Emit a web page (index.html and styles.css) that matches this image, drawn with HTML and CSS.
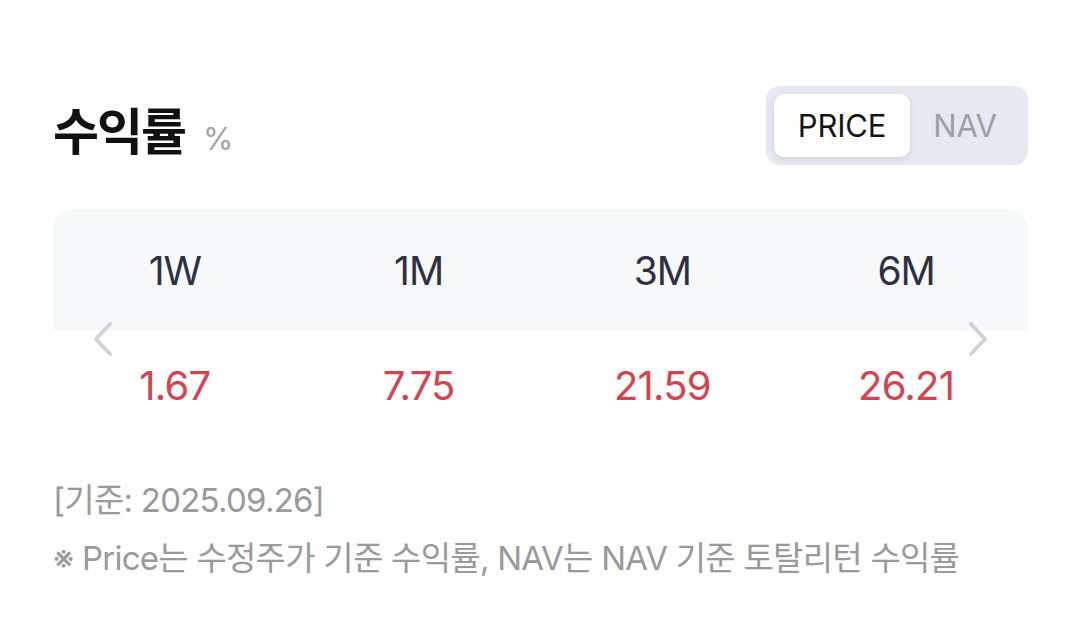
FILE: index.html
```html
<!DOCTYPE html>
<html lang="ko">
<head>
<meta charset="utf-8">
<link rel="stylesheet" href="styles.css">
</head>
<body>
<div class="page">
  <div class="header">
    <div class="title"><span class="title-main">수익률</span><span class="title-unit">%</span></div>
    <div class="toggle">
      <button class="tab tab-active">PRICE</button>
      <button class="tab">NAV</button>
    </div>
  </div>
  <div class="card">
    <div class="labels">
      <div class="cell">1W</div>
      <div class="cell">1M</div>
      <div class="cell">3M</div>
      <div class="cell">6M</div>
    </div>
    <div class="values">
      <div class="cell">1.67</div>
      <div class="cell">7.75</div>
      <div class="cell">21.59</div>
      <div class="cell">26.21</div>
    </div>
    <svg class="chev chev-left" width="24" height="36" viewBox="0 0 24 36"><path d="M19 3 L5 18 L19 33" fill="none" stroke="#cfd3da" stroke-width="4" stroke-linecap="round" stroke-linejoin="round"/></svg>
    <svg class="chev chev-right" width="24" height="36" viewBox="0 0 24 36"><path d="M5 3 L19 18 L5 33" fill="none" stroke="#cfd3da" stroke-width="4" stroke-linecap="round" stroke-linejoin="round"/></svg>
  </div>
  <div class="notes">
    <div class="note">[기준: 2025.09.26]</div>
    <div class="note">※ Price는 수정주가 기준 수익률, NAV는 NAV 기준 토탈리턴 수익률</div>
  </div>
</div>
</body>
</html>
```

FILE: styles.css
```css
* { box-sizing: border-box; }
html, body { margin: 0; padding: 0; background: #ffffff; }
body {
  font-family: Inter, "Noto Sans CJK KR", sans-serif;
  width: 1079px;
  height: 631px;
  overflow: hidden;
}
.page {
  padding: 86px 51px 0 53px;
}
.header {
  display: flex;
  justify-content: space-between;
  align-items: center;
  height: 79px;
}
.title {
  display: flex;
  align-items: baseline;
  gap: 18px;
  margin-top: 4px;
}
.title-main {
  font-family: "Noto Sans CJK KR", sans-serif;
  font-weight: 700;
  font-size: 50px;
  letter-spacing: -2px;
  color: #111111;
  line-height: 60px;
}
.title-unit {
  font-size: 31px;
  color: #a3a3a3;
  font-weight: 400;
}
.toggle {
  display: flex;
  background: #e6e9ef;
  border-radius: 14px;
  padding: 8px;
  height: 79px;
  width: 262px;
}
.tab {
  border: none;
  background: transparent;
  font-family: Inter, sans-serif;
  font-size: 31px;
  color: #9b9fa6;
  height: 63px;
  padding: 0;
  letter-spacing: -0.2px;
}
.tab:first-child { width: 136px; }
.tab:last-child { flex: 1; }
.tab-active {
  background: #ffffff;
  color: #151515;
  border-radius: 10px;
  box-shadow: 0 2px 6px rgba(0, 0, 0, 0.10);
}
.card {
  position: relative;
  margin-top: 44px;
}
.labels {
  display: grid;
  grid-template-columns: repeat(4, 1fr);
  background: #f7f8fa;
  border-radius: 20px 20px 0 0;
  height: 121px;
  align-items: center;
}
.labels .cell {
  text-align: center;
  font-size: 39px;
  color: #2c3142;
  letter-spacing: -1px;
  padding-top: 2px;
}
.values {
  display: grid;
  grid-template-columns: repeat(4, 1fr);
  height: 110px;
  align-items: center;
}
.values .cell {
  text-align: center;
  font-size: 40px;
  color: #d5434f;
  letter-spacing: -0.8px;
}
.chev {
  position: absolute;
  top: 112px;
}
.chev-left { left: 38px; }
.chev-right { right: 38px; }
.notes {
  margin-top: 31px;
  display: flex;
  flex-direction: column;
}
.note {
  font-family: Inter, "Noto Sans CJK KR", sans-serif;
  font-size: 33px;
  color: #9a9a9a;
  letter-spacing: -0.75px;
  line-height: 58px;
}
```
